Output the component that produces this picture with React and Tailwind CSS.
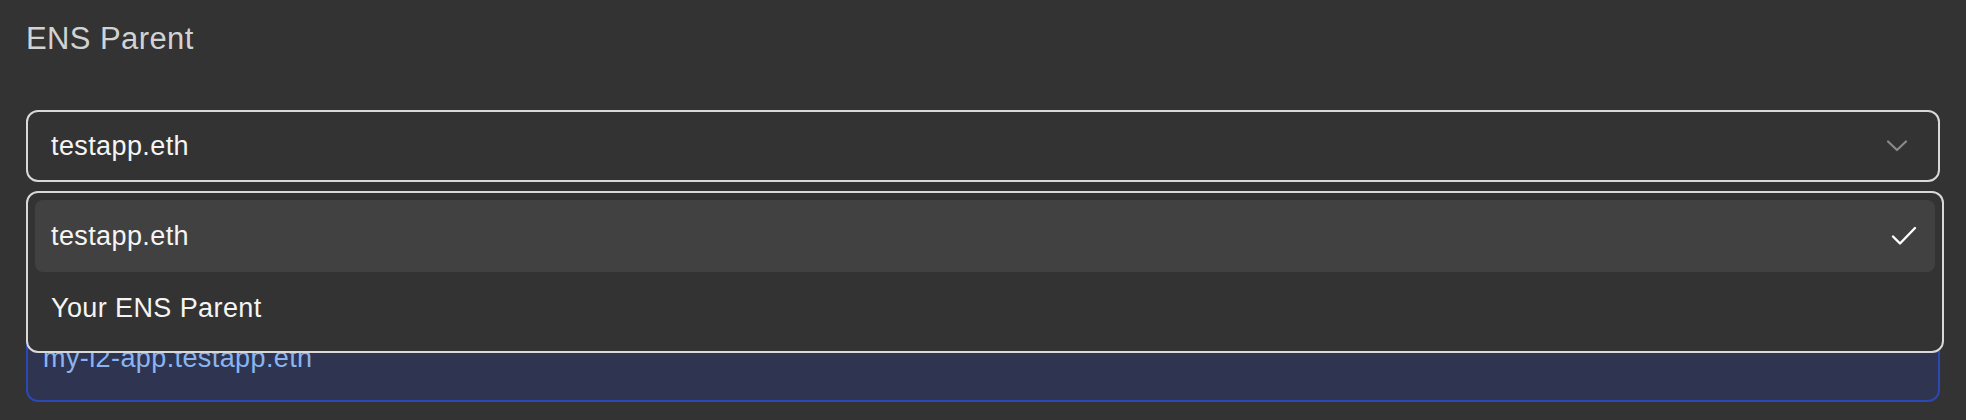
import React, { useState } from "react";

const options = ["testapp.eth", "Your ENS Parent"];

const ChevronDown = () => (
  <svg width="22" height="14" viewBox="0 0 22 14" fill="none" className="text-[#8a8a8a]">
    <path d="M2 2.5 11 11 20 2.5" stroke="currentColor" strokeWidth="2.2" strokeLinecap="round" strokeLinejoin="round" />
  </svg>
);

const Check = () => (
  <svg width="26" height="20" viewBox="0 0 26 20" fill="none" className="text-white">
    <path d="M2 10.5 9 17.5 24 2" stroke="currentColor" strokeWidth="2.4" strokeLinecap="round" strokeLinejoin="round" />
  </svg>
);

const App = () => {
  const [selected, setSelected] = useState("testapp.eth");

  return (
    <div
      className="min-h-[420px] w-full bg-[#333333] px-[26px] pt-[23px]"
      style={{ fontFamily: '"Liberation Sans", Arial, sans-serif' }}
    >
      {/* Label */}
      <div className="text-[31px] leading-[31px] text-[#d2d2d2] tracking-[0.4px]">ENS Parent</div>

      {/* Select */}
      <div className="relative mt-[56px]">
        <button
          type="button"
          className="flex h-[72px] w-full items-center justify-between rounded-[12px] border-2 border-[#d9d9d9] bg-[#333333] pl-[23px] pr-[30px] text-left text-[27px] tracking-[0.4px] text-[#f5f5f5]"
        >
          <span>{selected}</span>
          <ChevronDown />
        </button>

        {/* Open menu */}
        <div className="absolute left-0 right-[-4px] top-[81px] z-10 rounded-[12px] border-2 border-[#d9d9d9] bg-[#333333] p-[7px]">
          {options.map((opt) => (
            <div
              key={opt}
              onClick={() => setSelected(opt)}
              className={`flex h-[72px] cursor-pointer items-center justify-between rounded-[8px] pl-[16px] pr-[18px] text-[27px] tracking-[0.4px] text-[#f5f5f5] ${
                opt === selected ? "bg-[#414141]" : ""
              }`}
            >
              <span>{opt}</span>
              {opt === selected && <Check />}
            </div>
          ))}
        </div>

        {/* Subdomain preview (mostly covered by the menu) */}
        <div className="mt-[140px] h-[80px] rounded-[12px] border-2 border-[#2b48b5] bg-[#2f3450] px-[15px] pt-[19px] text-[27px] leading-[31px] tracking-[0.4px] text-[#8ab4ef]">
          my-l2-app.testapp.eth
        </div>
      </div>
    </div>
  );
};

export default App;
